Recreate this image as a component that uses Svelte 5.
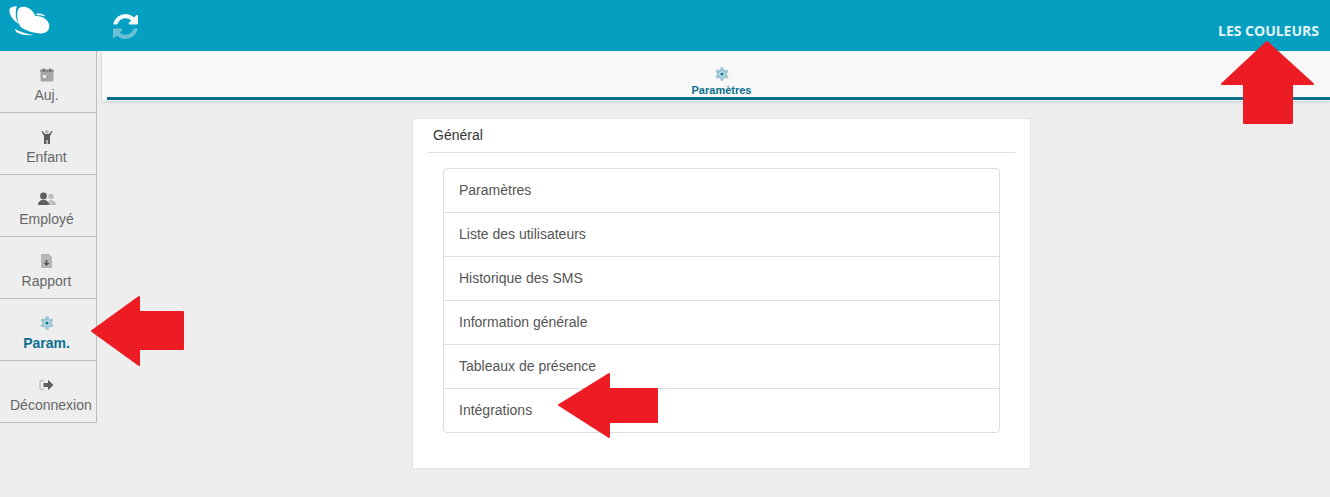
<script>
  // Sidebar entries
  const navItems = [
    { key: 'today', label: 'Auj.' },
    { key: 'child', label: 'Enfant' },
    { key: 'staff', label: 'Employé' },
    { key: 'report', label: 'Rapport' },
    { key: 'settings', label: 'Param.', active: true },
    { key: 'logout', label: 'Déconnexion' }
  ];

  const settingsLinks = [
    'Paramètres',
    'Liste des utilisateurs',
    'Historique des SMS',
    'Information générale',
    'Tableaux de présence',
    'Intégrations'
  ];
</script>

{#snippet gear()}
  <svg width="14" height="14" viewBox="0 0 14 14">
    <g fill="#9cc6d3">
      {#each [0, 60, 120] as angle}
        <rect x="5.400" y="0.300" width="3.200" height="13.400" rx="0.500" transform="rotate({angle} 7 7)" />
      {/each}
      <circle cx="7" cy="7" r="5" />
    </g>
    <circle cx="7" cy="7" r="2.600" fill="#d5e7ed" />
    <circle cx="7" cy="7" r="1.600" fill="#0a6f8c" />
  </svg>
{/snippet}

<div class="page">
  <header class="topbar">
    <div class="brand">
      <svg width="54" height="40" viewBox="0 0 54 40">
        <path fill="#fff" d="M9.500 9C11 7 14 6 16.800 6.300 15.800 9 15.600 13 16 17 16.300 19.500 17.500 22 19 24 14.500 21.500 11.500 18 10 14 9.500 12 9.300 10.500 9.500 9z" />
        <path fill="#fff" d="M17.500 11C18 7.500 22 6 26 7 30 8 33 11 35.500 16 40 15.800 47 18 49 24 50.500 30 46 34 40 33.500 33 33 27 31 22 28 18 25 16.500 17 17.500 11z" />
        <path fill="#fff" d="M36 14C39 13 43 13.500 45.500 16.500 42 15.200 39 15 37 15.300z" />
        <path fill="#fff" d="M15 29C20 32 27 34.200 34 35 27 36 20 34.500 16 32z" />
      </svg>
    </div>
    <button class="refresh" aria-label="Actualiser">
      <svg width="25" height="25" viewBox="0 0 1536 1536">
        <path fill="#6cc0d6" d="M1511 928q0 5-1 7-64 268-268 434.500t-478 166.500q-146 0-282.500-55t-243.500-157l-129 129q-19 19-45 19t-45-19-19-45v-448q0-26 19-45t45-19h448q26 0 45 19t19 45-19 45l-137 137q71 66 161 102t187 36q134 0 250-65t186-179q11-17 53-117 8-23 30-23h192q13 0 22.500 9.500t9.500 22.500z" />
        <path fill="#f2fafc" d="M1536 128v448q0 26-19 45t-45 19h-448q-26 0-45-19t-19-45 19-45l138-138q-148-137-349-137-134 0-250 65t-186 179q-11 17-53 117-8 23-30 23h-199q-13 0-22.500-9.500t-9.500-22.500v-7q65-268 270-434.500t480-166.500q146 0 284 55.500t245 156.500l130-129q19-19 45-19t45 19 19 45z" />
      </svg>
    </button>
    <span class="colors">LES COULEURS</span>
  </header>

  <div class="body">
    <nav class="sidebar">
      {#each navItems as item}
        <div class="nav-item" class:active={item.active}>
          <span class="nav-icon">
            {#if item.key === 'today'}
              <svg width="14" height="14" viewBox="0 0 14 14">
                <rect x="0.500" y="1.500" width="13" height="12" rx="1.500" fill="#a6a6a6" />
                <rect x="0.500" y="1.500" width="13" height="2.500" fill="#8c8c8c" />
                <rect x="3" y="0.500" width="1.500" height="3" fill="#666" />
                <rect x="9.500" y="0.500" width="1.500" height="3" fill="#666" />
                <rect x="3" y="7" width="3" height="3" fill="#eee" />
              </svg>
            {:else if item.key === 'child'}
              <svg width="14" height="14" viewBox="0 0 14 14">
                <circle cx="7" cy="1.800" r="1.800" fill="#b0b0b0" />
                <path fill="#5c5c5c" d="M1.500 1.500l1-.5L5 4h4l2.500-3 1 .5L10 6v8H7.600V10H6.400v4H4V6z" />
              </svg>
            {:else if item.key === 'staff'}
              <svg width="18" height="14" viewBox="0 0 18 14">
                <circle cx="13" cy="4.500" r="2.800" fill="#bdbdbd" />
                <path fill="#bdbdbd" d="M10 13c0-3 .5-5 3-5s5 2 5 5z" />
                <circle cx="5.500" cy="4" r="3.400" fill="#5f5f5f" />
                <path fill="#5f5f5f" d="M0 13c0-3 2-5 5.500-5s5.500 2 5.500 5z" />
              </svg>
            {:else if item.key === 'report'}
              <svg width="12" height="14" viewBox="0 0 12 14">
                <path fill="#b5b5b5" d="M0 0h8l3 3v11H0z" />
                <path fill="#555" d="M4.600 6h1.800v3H8.500L5.500 12 2.600 9h2z" />
              </svg>
            {:else if item.key === 'settings'}
              {@render gear()}
            {:else}
              <svg width="15" height="14" viewBox="0 0 15 14">
                <path fill="none" stroke="#c2c2c2" stroke-width="1.600" d="M5 2.500H2.500a1.500 1.500 0 0 0-1.500 1.500v6a1.500 1.500 0 0 0 1.500 1.500H5" />
                <path fill="#5f5f5f" d="M4.500 5h4.500V1.800L14.500 7 9 12.200V9H4.500z" />
              </svg>
            {/if}
          </span>
          <span class="nav-label">{item.label}</span>
        </div>
      {/each}
    </nav>

    <main class="content">
      <div class="tabbar">
        <div class="tab">
          <span class="tab-icon">{@render gear()}</span>
          <span class="tab-label">Paramètres</span>
        </div>
      </div>

      <section class="card">
        <h2>Général</h2>
        <ul class="list">
          {#each settingsLinks as link}
            <li>{link}</li>
          {/each}
        </ul>
      </section>
    </main>
  </div>

  <!-- red arrows drawn over the screenshot -->
  <svg class="arrows" width="1330" height="497" viewBox="0 0 1330 497">
    <g fill="#ed1c24" stroke="#ed1c24" stroke-width="2" stroke-linejoin="round">
      <path d="M1267 42L1313 84H1292V123H1244V84H1222z" />
      <path d="M92 331L139 297V312H183V349H139V365z" />
      <path d="M559 405L609 374V389H657V422H609V437z" />
    </g>
  </svg>
</div>

<style>
  :global(body) {
    margin: 0;
    background: #eee;
    font-family: "Liberation Sans", Arial, sans-serif;
    overflow: hidden;
  }
  .page {
    position: relative;
    width: 1330px;
    height: 497px;
    overflow: hidden;
  }
  .topbar {
    height: 51px;
    background: #059fc2;
    display: flex;
    align-items: flex-start;
  }
  .brand {
    width: 113px;
    height: 40px;
  }
  .brand svg {
    display: block;
  }
  .refresh {
    background: none;
    border: none;
    padding: 0;
    margin: 14px 0 0;
    height: 25px;
  }
  .refresh svg {
    display: block;
  }
  .colors {
    margin-left: auto;
    margin-top: 23px;
    margin-right: 11px;
    color: #e4f3f7;
    font-size: 14px;
    line-height: 16px;
    font-weight: 700;
    font-family: "Open Sans", "Liberation Sans", sans-serif;
  }
  .body {
    display: flex;
    align-items: flex-start;
  }
  .sidebar {
    width: 97px;
    box-sizing: border-box;
    border-right: 1px solid #bdbdbd;
    flex-shrink: 0;
  }
  .nav-item {
    height: 62px;
    box-sizing: border-box;
    border-bottom: 1px solid #bdbdbd;
    padding: 17px 13px 0 10px;
    text-align: center;
    color: #666;
    font-size: 14px;
    white-space: nowrap;
  }
  .nav-icon {
    height: 14px;
    display: flex;
    justify-content: center;
    align-items: center;
  }
  .nav-label {
    display: block;
    margin-top: 5px;
    line-height: 16px;
  }
  .nav-item.active .nav-label {
    color: #0a6f8c;
    font-weight: bold;
  }
  .content {
    flex: 1;
    min-width: 0;
    padding-left: 5px;
  }
  .tabbar {
    height: 50px;
    background: #f8f8f8;
    box-shadow: 0 1px 3px rgba(0, 0, 0, 0.15);
    padding-left: 5px;
    box-sizing: border-box;
  }
  .tab {
    height: 49px;
    box-sizing: border-box;
    border-bottom: 3px solid #0a6f8c;
    display: flex;
    flex-direction: column;
    align-items: center;
    padding: 16px 0 0 6px;
  }
  .tab-icon {
    height: 14px;
    display: flex;
  }
  .tab-label {
    margin-top: 3px;
    font-size: 11px;
    line-height: 13px;
    font-weight: bold;
    color: #0a6f8c;
  }
  .card {
    width: 619px;
    height: 351px;
    box-sizing: border-box;
    margin: 17px 0 0 310px;
    background: #fff;
    border: 1px solid #e3e3e3;
    padding: 0 15px;
  }
  h2 {
    margin: 0;
    height: 33px;
    padding-left: 5px;
    border-bottom: 1px solid #ddd;
    font-size: 14px;
    font-weight: normal;
    line-height: 32px;
    color: #333;
  }
  .list {
    list-style: none;
    margin: 15px 15px 0;
    padding: 0;
    border: 1px solid #ddd;
    border-radius: 4px;
  }
  .list li {
    height: 44px;
    box-sizing: border-box;
    padding-left: 15px;
    border-bottom: 1px solid #ddd;
    font-size: 14px;
    line-height: 43px;
    color: #555;
  }
  .list li:last-child {
    border-bottom: none;
    height: 43px;
  }
  .arrows {
    position: absolute;
    top: 0;
    left: 0;
    pointer-events: none;
  }
</style>
